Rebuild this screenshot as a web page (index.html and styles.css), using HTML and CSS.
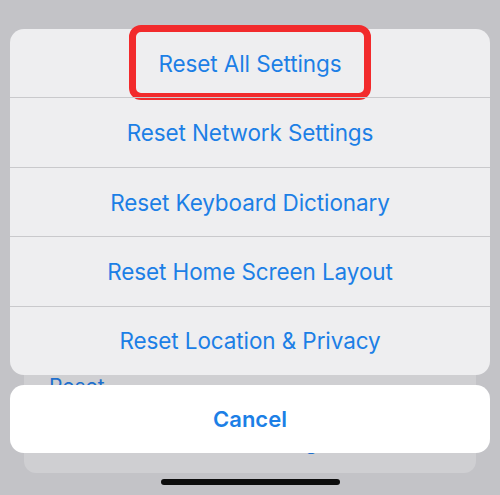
FILE: index.html
```html
<!DOCTYPE html>
<html lang="en">
<head>
<meta charset="utf-8">
<title>Reset</title>
<link rel="stylesheet" href="styles.css">
</head>
<body>
<div class="screen">
  <div class="behind">
    <div class="behind-row">Reset</div>
    <div class="behind-row erase">Erase All Content and Settings</div>
  </div>

  <div class="sheet-area">
    <div class="sheet">
      <div class="row first">
        <span class="label">Reset All Settings</span>
        <span class="highlight"></span>
      </div>
      <div class="row"><span class="label">Reset Network Settings</span></div>
      <div class="row"><span class="label">Reset Keyboard Dictionary</span></div>
      <div class="row"><span class="label">Reset Home Screen Layout</span></div>
      <div class="row"><span class="label">Reset Location &amp; Privacy</span></div>
    </div>
    <div class="cancel">Cancel</div>
    <div class="home-indicator"></div>
  </div>
</div>
</body>
</html>
```

FILE: styles.css
```css
html, body {
  margin: 0;
  padding: 0;
}

body {
  background: #c3c3c7;
  font-family: "Inter", "Liberation Sans", sans-serif;
}

.screen {
  position: relative;
  width: 500px;
  height: 495px;
  overflow: hidden;
}

.behind {
  position: absolute;
  left: 24px;
  right: 24px;
  top: 330px;
  bottom: 22px;
  background: #cfcfd2;
  border-radius: 12px;
  padding: 44px 0 0 25px;
  box-sizing: border-box;
}

.behind-row {
  color: #1f6fcc;
  font-size: 21px;
  line-height: 26px;
  white-space: nowrap;
}

.behind-row.erase {
  margin-top: 30px;
  font-size: 19.5px;
}

.sheet-area {
  position: relative;
  padding: 29px 10px 0;
  display: flex;
  flex-direction: column;
}

.sheet {
  height: 346px;
  background: #eeeef0;
  border-radius: 14px;
  display: flex;
  flex-direction: column;
}

.row {
  position: relative;
  flex: 1;
  display: flex;
  align-items: center;
  justify-content: center;
  border-top: 1px solid #c9c9cc;
}

.row.first {
  border-top: none;
}

.label {
  color: #1c7fe6;
  font-size: 22.5px;
  letter-spacing: -0.1px;
}

.highlight {
  position: absolute;
  left: 50%;
  top: -4px;
  width: 242px;
  height: 75px;
  margin-left: -121px;
  box-sizing: border-box;
  border: 7px solid #f22a2c;
  border-radius: 12px;
}

.cancel {
  margin-top: 10px;
  height: 68px;
  background: #ffffff;
  border-radius: 14px;
  display: flex;
  align-items: center;
  justify-content: center;
  color: #1c7fe6;
  font-size: 22px;
  font-weight: 600;
}

.home-indicator {
  align-self: center;
  margin-top: 26px;
  width: 179px;
  height: 6px;
  border-radius: 3px;
  background: #0d0d0d;
}
```
